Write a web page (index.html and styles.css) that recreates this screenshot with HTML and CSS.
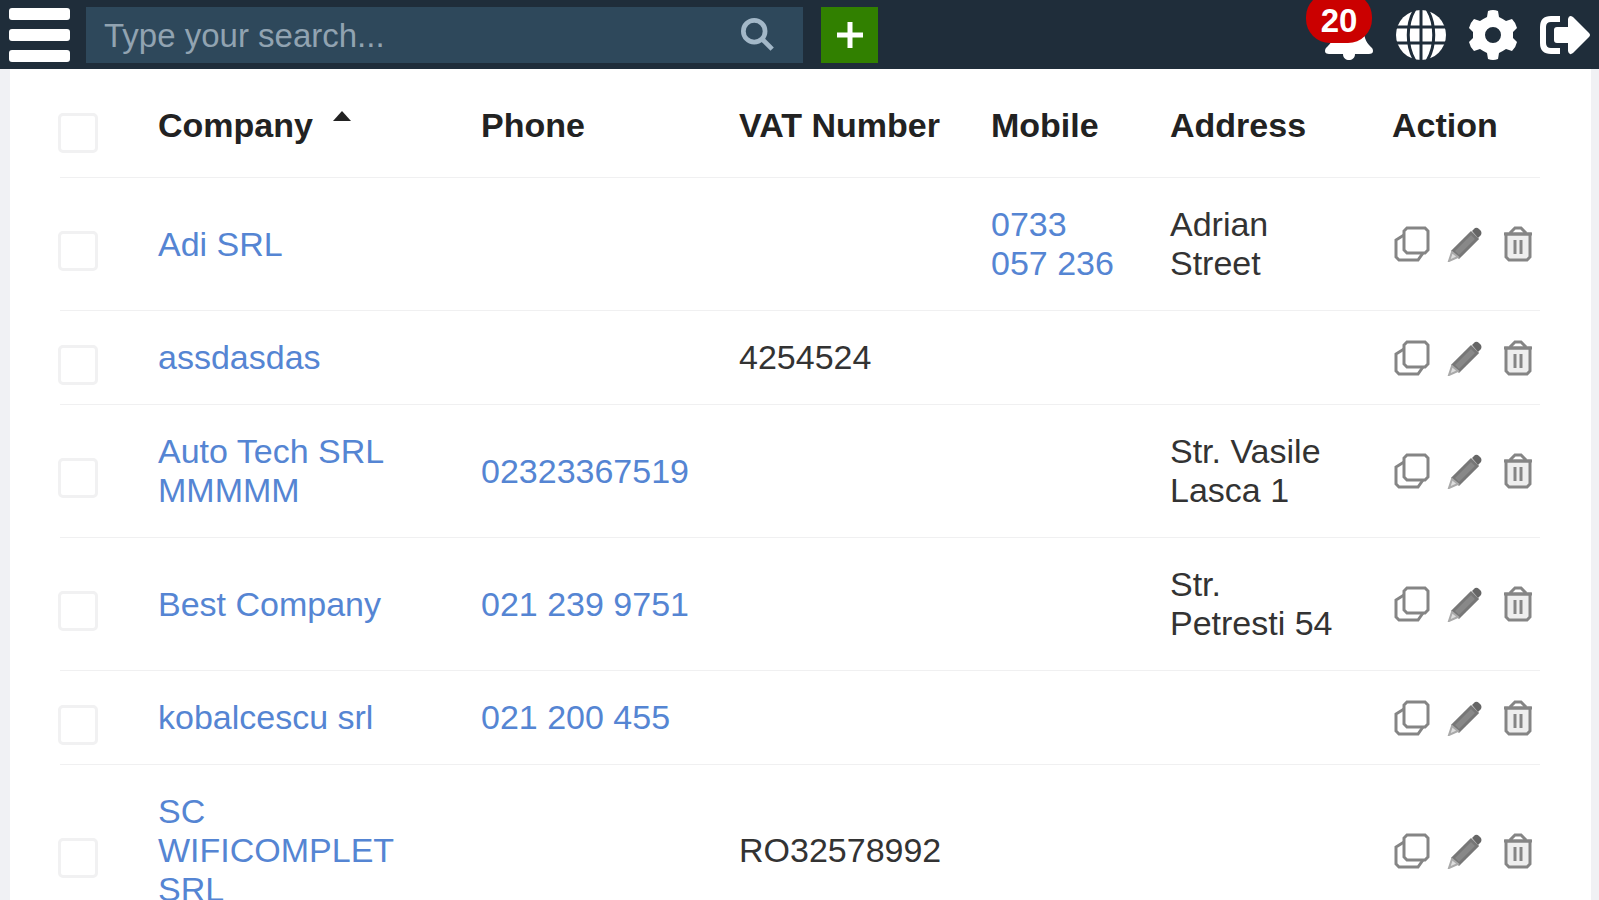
FILE: index.html
```html
<!DOCTYPE html>
<html lang="en">
<head>
<meta charset="UTF-8">
<meta name="viewport" content="width=device-width, initial-scale=1.0">
<title>Companies</title>
<link rel="stylesheet" href="styles.css">
</head>
<body>

<header class="topbar">
    <button type="button" class="menu-btn" aria-label="Menu"><span></span><span></span><span></span></button>
    <form class="search" onsubmit="return false">
        <input type="text" class="search-input" placeholder="Type your search..." aria-label="Search">
        <button type="submit" class="search-btn" aria-label="Search">
            <svg viewBox="0 0 36 36"><circle cx="14" cy="14" r="11.5"/><path d="M22.5 22.5L33 33"/></svg>
        </button>
    </form>
    <button type="button" class="add-btn" aria-label="Add">
        <svg viewBox="0 0 26 26"><path d="M13 0v26M0 13h26"/></svg>
    </button>
    <nav class="tools">
        <button type="button" class="tool bell" aria-label="Notifications">
            <svg viewBox="0 0 50 50"><path d="M25 0c3 0 4 2 4 4 7 2 11 8 11 15 0 11 3 14 8 19 2 3 1 6-3 6H31c0 4-3 6-6 6s-6-2-6-6H5c-4 0-5-3-3-6 5-5 8-8 8-19 0-7 4-13 11-15 0-2 1-4 4-4z"/></svg>
            <span class="badge">20</span>
        </button>
        <button type="button" class="tool" aria-label="Language">
            <svg viewBox="0 0 50 50"><circle cx="25" cy="25" r="25"/><path class="cut" d="M0 17h50M0 33h50M25 0v50M19 -1C10 14 10 36 19 51M31 -1C40 14 40 36 31 51"/></svg>
        </button>
        <button type="button" class="tool" aria-label="Settings">
            <svg viewBox="0 0 50 50"><path fill-rule="evenodd" d="M20 1Q25-1 30 1L31 7Q35 9 38 11L44 9Q48 13 49 18L45 22V28L49 32Q48 37 44 41L38 39Q35 41 31 43L30 49Q25 51 20 49L19 43Q15 41 12 39L6 41Q2 37 1 32L5 28V22L1 18Q2 13 6 9L12 11Q15 9 19 7ZM25 17a8 8 0 1 0 0 16 8 8 0 0 0 0-16z"/></svg>
        </button>
        <button type="button" class="tool" aria-label="Log out">
            <svg viewBox="0 0 50 50"><path class="line" d="M20 9H11Q3 9 3 17V33Q3 41 11 41H20"/><path d="M14 20Q14 17 17 17H28V9Q29 4 33 7L49 23Q51 25 49 27L33 43Q29 46 28 41V33H17Q14 33 14 30z"/></svg>
        </button>
    </nav>
</header>

<main class="panel">
    <table class="companies">
        <colgroup>
            <col class="col-check">
            <col class="col-company">
            <col class="col-phone">
            <col class="col-vat">
            <col class="col-mobile">
            <col class="col-address">
            <col class="col-action">
        </colgroup>
        <thead>
            <tr>
                <th><input type="checkbox" aria-label="Select all"></th>
                <th>Company<span class="sort"></span></th>
                <th>Phone</th>
                <th>VAT Number</th>
                <th>Mobile</th>
                <th>Address</th>
                <th>Action</th>
            </tr>
        </thead>
        <tbody id="rows"></tbody>
    </table>
</main>

<template id="actions">
    <div class="actions">
        <button type="button" aria-label="Copy">
            <svg viewBox="0 0 36 36"><path d="M13 2H31L34 5V24L31 27H13L10 24V5z"/><path d="M10 9L2 14V31L5 34H24L29 27"/></svg>
        </button>
        <button type="button" aria-label="Edit">
            <svg viewBox="0 0 36 36"><path class="pencil" d="M24 7L30 13L12 31L6 25z"/><path class="eraser" d="M25 5L28 2Q30 1 32 3L34 5Q35 7 34 9L31 12z"/><path class="tip" d="M5 26L11 31L2 35z"/></svg>
        </button>
        <button type="button" aria-label="Delete">
            <svg viewBox="0 0 36 36"><path class="can" d="M6 8H30V31L27 34H9L6 31z"/><path d="M4 8H32M10 7L15 2H21L26 7M15 14V28M21 14V28"/></svg>
        </button>
    </div>
</template>

<script>
var companies = [
    { name: 'Adi SRL', phone: '', vat: '', mobile: '0733 057 236', address: 'Adrian Street' },
    { name: 'assdasdas', phone: '', vat: '4254524', mobile: '', address: '' },
    { name: 'Auto Tech SRL MMMMM', phone: '02323367519', vat: '', mobile: '', address: 'Str. Vasile Lasca 1' },
    { name: 'Best Company', phone: '021 239 9751', vat: '', mobile: '', address: 'Str. Petresti 54' },
    { name: 'kobalcescu srl', phone: '021 200 455', vat: '', mobile: '', address: '' },
    { name: 'SC WIFICOMPLET SRL', phone: '', vat: 'RO32578992', mobile: '', address: '' }
];

function link(text, href) {
    return text ? '<a href="' + href + '">' + text + '</a>' : '';
}

function tel(number) {
    return link(number, 'tel:' + number.replace(/ /g, ''));
}

var rows = document.getElementById('rows');
var actions = document.getElementById('actions').innerHTML;

companies.forEach(function (c) {
    var row = document.createElement('tr');
    row.innerHTML = '<td><input type="checkbox" aria-label="Select ' + c.name + '"></td>' +
        '<td>' + link(c.name, '#') + '</td>' +
        '<td>' + tel(c.phone) + '</td>' +
        '<td>' + c.vat + '</td>' +
        '<td>' + tel(c.mobile) + '</td>' +
        '<td class="address">' + c.address + '</td>' +
        '<td>' + actions + '</td>';
    rows.appendChild(row);
});
</script>

</body>
</html>
```

FILE: styles.css
```css
* {
    box-sizing: border-box;
}

body {
    display: flex;
    flex-direction: column;
    height: 100vh;
    margin: 0;
    overflow: hidden;
    background-color: #f0f1f4;
    color: #333;
    font-family: "Liberation Sans", Arial, sans-serif;
    font-size: 34px;
    line-height: 39px;
}

button {
    padding: 0;
    border: none;
    background: none;
    cursor: pointer;
}

svg {
    display: block;
}

/* top bar */

.topbar {
    display: flex;
    flex: none;
    align-items: center;
    padding: 7px 9px 6px;
    background-color: #1f2d3a;
}

.menu-btn {
    display: flex;
    flex-direction: column;
    gap: 9px;
    width: 61px;
    margin-right: 16px;
}

.menu-btn span {
    width: 100%;
    height: 12px;
    border-radius: 3px;
    background-color: #fff;
}

.search {
    display: flex;
    flex: 0 1 717px;
    align-items: center;
    height: 56px;
    padding: 0 28px 0 18px;
    background-color: #2e485b;
}

.search-input {
    flex: 1;
    min-width: 0;
    padding: 0;
    border: none;
    outline: none;
    background: none;
    color: #fff;
    font: inherit;
    font-size: 33px;
}

.search-input::placeholder {
    color: #91a3b1;
    opacity: 1;
}

.search-btn svg {
    width: 34px;
    height: 34px;
    fill: none;
    stroke: #a3b8c8;
    stroke-width: 5;
}

.add-btn {
    display: flex;
    align-items: center;
    justify-content: center;
    width: 57px;
    height: 56px;
    margin-left: 18px;
    background-color: #318000;
}

.add-btn svg {
    width: 26px;
    height: 26px;
    stroke: #fff;
    stroke-width: 5;
}

.tools {
    display: flex;
    gap: 22px;
    margin-left: auto;
}

.tool {
    position: relative;
}

.tool svg {
    width: 50px;
    height: 50px;
    fill: #fff;
}

.tool .cut {
    fill: none;
    stroke: #1f2d3a;
    stroke-width: 3;
}

.tool .line {
    fill: none;
    stroke: #fff;
    stroke-width: 6;
}

.badge {
    position: absolute;
    right: 2px;
    bottom: 17px;
    width: 66px;
    height: 50px;
    padding-top: 10px;
    border-radius: 24px;
    background-color: #cb0000;
    color: #fff;
    font: bold 33px/36px "Liberation Sans", Arial, sans-serif;
    text-align: center;
}

/* company list */

.panel {
    flex: 1;
    margin: 0 8px 0 10px;
    padding: 0 51px 0 50px;
    overflow: hidden;
    background-color: #fff;
}

.companies {
    width: 100%;
    border-collapse: separate;
    border-spacing: 0;
    table-layout: fixed;
}

.col-check { width: 98px; }
.col-phone { width: 258px; }
.col-vat { width: 252px; }
.col-mobile { width: 179px; }
.col-address { width: 222px; }
.col-action { width: 148px; }

th,
td {
    padding: 27px 44px 27px 0;
    border-bottom: 1px solid #f0f0f1;
    text-align: left;
    vertical-align: middle;
}

th {
    padding-top: 37px;
    padding-bottom: 32px;
    color: #222;
    white-space: nowrap;
}

.address {
    padding-right: 56px;
}

th:first-child,
td:first-child,
th:last-child,
td:last-child {
    padding-right: 0;
}

.companies input {
    display: block;
    appearance: none;
    width: 40px;
    height: 40px;
    margin: 14px 0 0 -2px;
    border: 3px solid #f1f1f2;
    border-radius: 5px;
    background-color: #fff;
}

.companies th input {
    margin-top: 20px;
}

th:first-child,
td:first-child {
    padding-top: 0;
    padding-bottom: 0;
}

.sort {
    display: inline-block;
    margin-left: 20px;
    border: 9px solid transparent;
    border-top: none;
    border-bottom: 10px solid #222;
    vertical-align: 16px;
}

a {
    color: #5585d3;
    text-decoration: none;
}

.actions {
    display: flex;
    gap: 17px;
    padding-left: 2px;
}

.actions svg {
    width: 36px;
    height: 36px;
    fill: none;
    stroke: #858585;
    stroke-width: 3;
}

.actions .pencil {
    fill: #888;
    stroke: #777;
}

.actions .eraser {
    fill: #666;
    stroke: none;
}

.actions .tip {
    fill: #ddd;
    stroke: #aaa;
    stroke-width: 2;
}

.actions .can {
    fill: #eee;
}
```
